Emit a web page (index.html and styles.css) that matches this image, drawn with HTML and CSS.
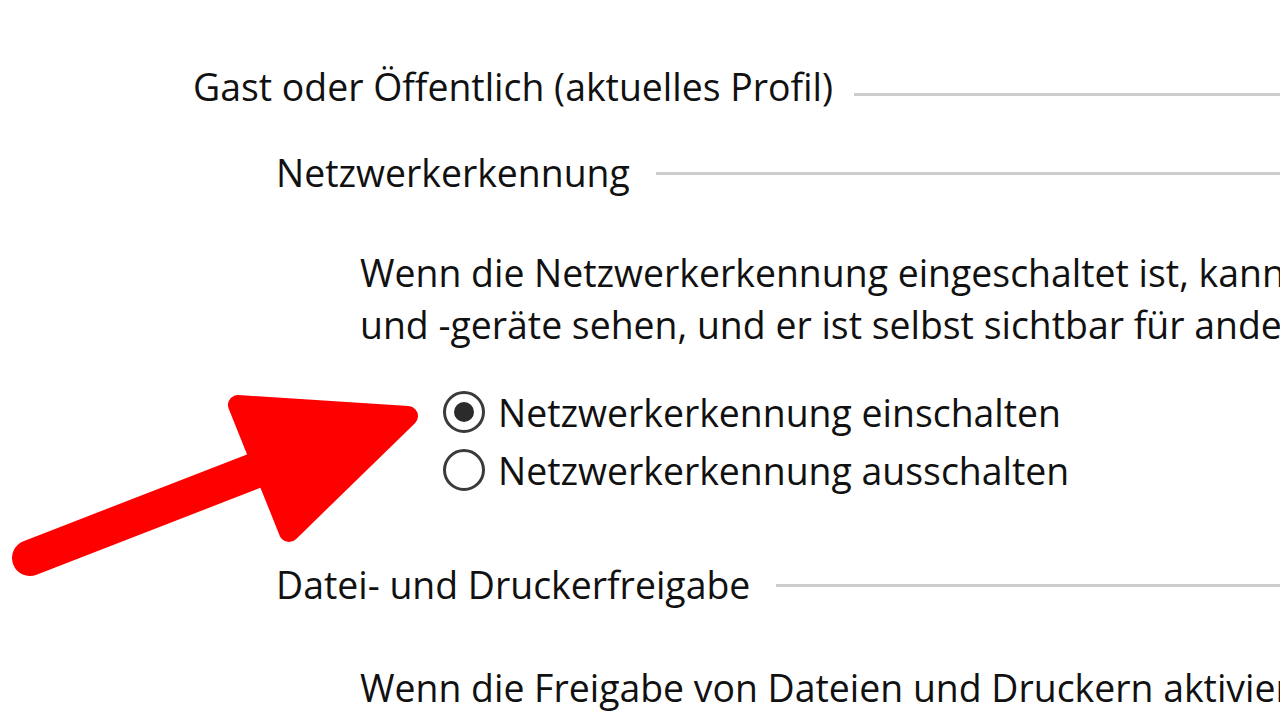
FILE: index.html
```html
<!DOCTYPE html>
<html lang="de">
<head>
<meta charset="utf-8">
<title>Netzwerkerkennung</title>
<link rel="stylesheet" href="styles.css">
</head>
<body>
<div class="page">
  <div class="group-head level1">
    <span class="group-title">Gast oder Öffentlich (aktuelles Profil)</span>
    <span class="rule"></span>
  </div>
  <div class="group-head level2">
    <span class="group-title">Netzwerkerkennung</span>
    <span class="rule"></span>
  </div>
  <p class="desc first-desc">Wenn die Netzwerkerkennung eingeschaltet ist, kann dieser Computer andere Netzwerkcomputer<br>und -geräte sehen, und er ist selbst sichtbar für andere Netzwerkcomputer.</p>
  <div class="options">
    <label class="option"><span class="radio checked"></span><span class="option-text">Netzwerkerkennung einschalten</span></label>
    <label class="option"><span class="radio"></span><span class="option-text">Netzwerkerkennung ausschalten</span></label>
  </div>
  <div class="group-head level2 second">
    <span class="group-title">Datei- und Druckerfreigabe</span>
    <span class="rule"></span>
  </div>
  <p class="desc second-desc">Wenn die Freigabe von Dateien und Druckern aktiviert ist, können Netzwerkbenutzer auf</p>
</div>
<svg class="arrow" width="1280" height="720" viewBox="0 0 1280 720" aria-hidden="true">
  <line x1="30" y1="558" x2="272" y2="464" stroke="#ff0000" stroke-width="36" stroke-linecap="round"/>
  <polygon points="238,405 408,416 289,532" fill="#ff0000" stroke="#ff0000" stroke-width="20" stroke-linejoin="round"/>
</svg>
</body>
</html>
```
FILE: styles.css
```css
html, body {
  margin: 0;
  padding: 0;
  background: #ffffff;
  overflow: hidden;
}
body {
  width: 1280px;
  height: 720px;
  position: relative;
  font-family: "Open Sans", "Noto Sans", sans-serif;
  font-size: 37.4px;
  color: #111111;
}
.page {
  padding-top: 61px;
}
.group-head {
  display: flex;
  align-items: center;
  height: 52px;
  line-height: 52px;
}
.level1 {
  padding-left: 193px;
}
.level2 {
  padding-left: 276px;
  margin-top: 34px;
}
.level2.second {
  margin-top: 60px;
}
.group-title {
  white-space: nowrap;
}
.rule {
  flex: 1;
  height: 3px;
  background: #cdcdcd;
  margin-left: 26px;
  margin-top: 0;
}
.level1 .rule {
  margin-left: 21px;
  margin-top: 14px;
}
.desc {
  margin: 0;
  padding-left: 360px;
  line-height: 52px;
  white-space: nowrap;
}
.first-desc {
  margin-top: 48px;
}
.second-desc {
  margin-top: 51px;
}
.options {
  margin-top: 32px;
  padding-left: 443px;
}
.option {
  display: flex;
  align-items: center;
  height: 58px;
  white-space: nowrap;
}
.radio {
  width: 36px;
  height: 36px;
  border: 3px solid #3a3a3a;
  border-radius: 50%;
  box-sizing: content-box;
  position: relative;
  margin-right: 13px;
  background: #ffffff;
  flex: none;
}
.radio.checked::after {
  content: "";
  position: absolute;
  left: 8px;
  top: 8px;
  width: 20px;
  height: 20px;
  border-radius: 50%;
  background: #2b2b2b;
}
.arrow {
  position: absolute;
  left: 0;
  top: 0;
  pointer-events: none;
}
```
